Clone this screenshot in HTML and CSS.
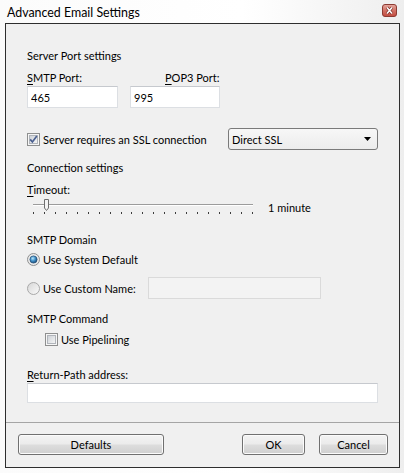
FILE: index.html
```html
<!DOCTYPE html>
<html lang="en">
<head>
  <meta charset="UTF-8" />
  <title>Advanced Email Settings</title>
  <link rel="stylesheet" href="styles.css">
</head>
<body>

  <div class="titlebar">
    <span class="title">Advanced Email Settings</span>
    <span class="close-btn">
      <svg width="15" height="13" viewBox="0 0 15 13">
        <defs>
          <linearGradient id="closeBg" x1="0" y1="0" x2="0" y2="1">
            <stop offset="0" stop-color="#e6aaa1"/>
            <stop offset="0.45" stop-color="#d3766a"/>
            <stop offset="1" stop-color="#c24a3e"/>
          </linearGradient>
        </defs>
        <rect x="0.5" y="0.5" width="14" height="12" rx="2.5" fill="url(#closeBg)" stroke="#8c3b33"/>
        <path d="M5 3.5 L10 9.5 M10 3.5 L5 9.5" stroke="#7a2f28" stroke-width="2.8"/>
        <path d="M5 3.5 L10 9.5 M10 3.5 L5 9.5" stroke="#fff" stroke-width="1.5"/>
      </svg>
    </span>
  </div>

  <div class="dialog">
    <div class="content">
      <div class="group-title first">Server Port settings</div>

      <div class="port-labels">
        <label class="smtp-label"><u>S</u>MTP Port:</label>
        <label class="pop-label"><u>P</u>OP3 Port:</label>
      </div>
      <div class="port-fields">
        <input type="text" class="textbox smtp-field" value="465" />
        <input type="text" class="textbox pop-field" value="995" />
      </div>

      <div class="ssl-row">
        <label class="check">
          <svg class="box" width="13" height="13" viewBox="0 0 13 13">
            <defs>
              <linearGradient id="cb1" x1="0" y1="0" x2="1" y2="1">
                <stop offset="0" stop-color="#cbcfd5"/>
                <stop offset="1" stop-color="#f7f7f7"/>
              </linearGradient>
            </defs>
            <rect x="0.5" y="0.5" width="12" height="12" fill="#f6f6f6" stroke="#8e8f8f"/>
            <rect x="2.5" y="2.5" width="8" height="8" fill="url(#cb1)" stroke="#b0b4ba"/>
            <path d="M3.2 6.4 L5.4 9 L9.8 3" fill="none" stroke="#4a5f8f" stroke-width="1.7"/>
          </svg>
          Server requires an SSL connection
        </label>
        <div class="dropdown">
          <span>Direct SSL</span>
          <svg width="7" height="4" viewBox="0 0 7 4"><path d="M0 0 H7 L3.5 4 Z" fill="#000"/></svg>
        </div>
      </div>

      <div class="group-title">Connection settings</div>
      <div class="field-label"><u>T</u>imeout:</div>
      <div class="slider-row">
        <div class="slider">
          <div class="track"></div>
          <div class="ticks">
            <i></i><i></i><i></i><i></i><i></i><i></i><i></i>
            <i></i><i></i><i></i><i></i><i></i><i></i><i></i>
            <i></i><i></i><i></i><i></i><i></i><i></i><i></i>
          </div>
          <svg class="thumb" width="5" height="12" viewBox="0 0 5 12">
            <path d="M0.5 0.5 H4.5 V9 L2.5 11.5 L0.5 9 Z" fill="#f4f4f4" stroke="#6f6f6f"/>
          </svg>
        </div>
        <span class="slider-value">1 minute</span>
      </div>

      <div class="group-title domain">SMTP Domain</div>
      <label class="radio-row first-radio">
        <svg class="box" width="13" height="13" viewBox="0 0 13 13">
          <defs>
            <radialGradient id="rdot" cx="0.4" cy="0.35" r="0.7">
              <stop offset="0" stop-color="#b9e6fa"/>
              <stop offset="0.5" stop-color="#3f8fc8"/>
              <stop offset="1" stop-color="#17466f"/>
            </radialGradient>
          </defs>
          <circle cx="6.5" cy="6.5" r="6" fill="#e9e9e9" stroke="#8e8f8f"/>
          <circle cx="6.5" cy="6.5" r="3.6" fill="url(#rdot)" stroke="#1f4b74" stroke-width="0.7"/>
        </svg>
        Use System Default
      </label>
      <div class="radio-row custom-row">
        <label class="radio-label">
          <svg class="box" width="13" height="13" viewBox="0 0 13 13">
            <defs>
              <linearGradient id="rOff" x1="0" y1="0" x2="1" y2="1">
                <stop offset="0" stop-color="#d6d6d6"/>
                <stop offset="1" stop-color="#fbfbfb"/>
              </linearGradient>
            </defs>
            <circle cx="6.5" cy="6.5" r="6" fill="url(#rOff)" stroke="#a8a8a8"/>
          </svg>
          Use Custom Name:
        </label>
        <input type="text" class="textbox custom-field" disabled />
      </div>

      <div class="group-title command">SMTP Command</div>
      <label class="check pipelining">
        <svg class="box" width="13" height="13" viewBox="0 0 13 13">
          <defs>
            <linearGradient id="cb2" x1="0" y1="0" x2="1" y2="1">
              <stop offset="0" stop-color="#cbcfd5"/>
              <stop offset="1" stop-color="#f7f7f7"/>
            </linearGradient>
          </defs>
          <rect x="0.5" y="0.5" width="12" height="12" fill="#f6f6f6" stroke="#8e8f8f"/>
          <rect x="2.5" y="2.5" width="8" height="8" fill="url(#cb2)" stroke="#b0b4ba"/>
        </svg>
        Use Pipelining
      </label>

      <div class="field-label return-label"><u>R</u>eturn-Path address:</div>
      <input type="text" class="textbox return-field" />
    </div>

    <div class="footer">
      <button class="btn defaults">Defaults</button>
      <button class="btn ok">OK</button>
      <button class="btn cancel">Cancel</button>
    </div>
  </div>

</body>
</html>
```

FILE: styles.css
```css
* {
  box-sizing: border-box;
}
body {
  margin: 0;
  width: 404px;
  height: 473px;
  overflow: hidden;
  font-family: Lato, "Liberation Sans", sans-serif;
  font-size: 11px;
  color: #000;
  background: linear-gradient(90deg, #fbfbfb 0%, #ffffff 60%, #eeeeee 100%);
}
u {
  text-decoration: underline;
  text-underline-offset: 2px;
}

/* title bar */
.titlebar {
  height: 23px;
  display: flex;
  justify-content: space-between;
  padding: 0 7px;
}
.title {
  font-size: 12.4px;
  line-height: 23px;
  padding-top: 1px;
}
.close-btn {
  margin-top: 4px;
  height: 13px;
  display: flex;
}

/* dialog frame */
.dialog {
  margin-left: 5px;
  width: 395px;
  height: 445px;
  border: 1px solid #2e2e2e;
  background-color: #f0f0f0;
  display: flex;
  flex-direction: column;
}
.content {
  flex: 1;
  padding: 0 21px;
  display: flex;
  flex-direction: column;
  align-items: flex-start;
}
.group-title,
.field-label,
.port-labels {
  line-height: 15px;
  height: 15px;
}
.group-title {
  margin-top: 10px;
}
.group-title.first {
  margin-top: 24px;
}
.group-title.domain {
  margin-top: 15px;
}
.group-title.command {
  margin-top: 12px;
}
.field-label {
  margin-top: 7px;
}
.return-label {
  margin-top: 20px;
}

/* ports */
.port-labels {
  margin-top: 7px;
  display: flex;
}
.smtp-label {
  width: 138px;
}
.port-fields {
  margin-top: 1px;
  display: flex;
  gap: 12px;
}
.textbox {
  height: 22px;
  border: 1px solid #dcdfe3;
  border-top-color: #c6c9ce;
  background: #fff;
  font-family: inherit;
  font-size: 11px;
  padding: 0 3px;
  color: #000;
  outline: none;
}
.smtp-field {
  width: 91px;
}
.pop-field {
  width: 90px;
}

/* checkboxes and radios */
.check,
.radio-row,
.radio-label {
  display: flex;
  align-items: center;
  gap: 3px;
  line-height: 15px;
}
.box {
  flex: none;
}
.ssl-row {
  margin-top: 20px;
  width: 100%;
  height: 22px;
  display: flex;
  align-items: center;
  justify-content: space-between;
}
.dropdown {
  width: 150px;
  height: 22px;
  border: 1px solid #7a7a7a;
  border-radius: 3px;
  background: linear-gradient(#f7f7f7, #ececec);
  display: flex;
  align-items: center;
  justify-content: space-between;
  padding: 0 6px 0 3px;
}

/* slider */
.slider-row {
  height: 20px;
  display: flex;
  align-items: center;
  gap: 15px;
}
.slider {
  position: relative;
  margin-left: 6px;
  width: 220px;
  height: 20px;
  padding-top: 7px;
}
.track {
  height: 2px;
  border-top: 1px solid #9c9c9c;
  border-bottom: 1px solid #ffffff;
  background: #d6d6d6;
}
.ticks {
  margin-top: 6px;
  display: flex;
  justify-content: space-between;
}
.ticks i {
  width: 1px;
  height: 2px;
  background: #3c3c3c;
}
.thumb {
  position: absolute;
  left: 11px;
  top: 2px;
}

/* smtp domain */
.first-radio {
  margin-top: 4px;
  height: 16px;
}
.custom-row {
  margin-top: 10px;
  height: 22px;
  gap: 0;
}
.radio-label {
  width: 121px;
}
.custom-field {
  width: 173px;
  background: #f3f3f3;
  border-color: #dadada;
}
.pipelining {
  margin-top: 5px;
  margin-left: 18px;
  height: 16px;
}
.return-field {
  margin-top: 1px;
  width: 351px;
  height: 20px;
}

/* buttons */
.footer {
  height: 45px;
  border-top: 1px solid #a5a5a5;
  padding: 11px 11px 0 12px;
  display: flex;
  gap: 14px;
}
.btn {
  height: 21px;
  border: 1px solid #707070;
  border-radius: 3px;
  background: linear-gradient(#f3f3f3 0%, #ebebeb 48%, #dddddd 52%, #cfcfcf 100%);
  box-shadow: inset 0 0 0 1px #fbfbfb;
  font-family: inherit;
  font-size: 11px;
  color: #000;
  padding: 0;
}
.defaults {
  width: 146px;
  margin-right: auto;
}
.ok {
  width: 63px;
}
.cancel {
  width: 69px;
}
```
